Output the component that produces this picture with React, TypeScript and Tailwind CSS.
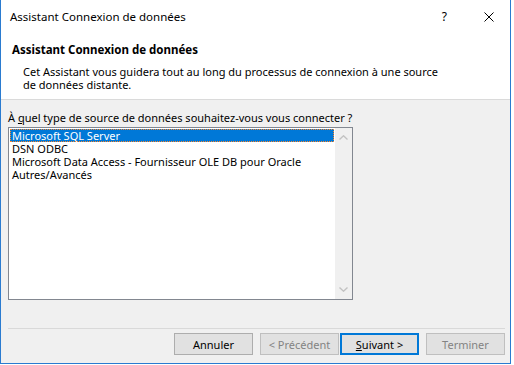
import React from "react";

const font = { fontFamily: '"Noto Sans", "Segoe UI", sans-serif' };

function Btn({
  children,
  disabled,
  primary,
}: {
  children: React.ReactNode;
  disabled?: boolean;
  primary?: boolean;
}) {
  return (
    <div
      className={
        "w-[79px] h-[22px] flex items-center justify-center bg-[#e1e1e1] text-[11px] leading-none " +
        (primary
          ? "border-2 border-[#0078d7] text-black"
          : disabled
          ? "border border-[#bfbfbf] text-[#838383]"
          : "border border-[#adadad] text-black")
      }
    >
      {children}
    </div>
  );
}

export default function App() {
  const items = [
    "Microsoft SQL Server",
    "DSN ODBC",
    "Microsoft Data Access - Fournisseur OLE DB pour Oracle",
    "Autres/Avancés",
  ];
  return (
    <div className="w-[514px] h-[365px] bg-white" style={font}>
      <div className="w-[511px] h-[364px] border-x border-b border-[#2a7bd0] bg-[#f0f0f0] flex flex-col text-black">
        {/* title bar */}
        <div className="h-[31px] bg-white flex items-center shrink-0">
          <div className="pl-[9px] text-[11.5px] leading-none pt-[3px]">
            Assistant Connexion de données
          </div>
          <div className="ml-auto flex items-center pt-[3px]">
            <div className="text-[12px] leading-none mr-[37px]">?</div>
            <svg width="10" height="10" viewBox="0 0 10 10" className="mr-[16px]">
              <path d="M0.5 0.5 L9.5 9.5 M9.5 0.5 L0.5 9.5" stroke="#000" strokeWidth="1" />
            </svg>
          </div>
        </div>
        {/* header */}
        <div className="h-[69px] bg-white border-b border-[#dadada] shrink-0 pt-[11px]">
          <div className="pl-[11px] text-[11.5px] font-bold leading-[16px]">
            Assistant Connexion de données
          </div>
          <div className="pl-[22px] pt-[7px] text-[11px] leading-[13px]">
            Cet Assistant vous guidera tout au long du processus de connexion à une source
            <br />
            de données distante.
          </div>
        </div>
        {/* body */}
        <div className="h-[264px] flex flex-col pl-[7px] pr-[5px]">
          <div className="pt-[10px] h-[27px] text-[11px] leading-[16px]">
            À <span className="underline">q</span>uel type de source de données souhaitez-vous vous connecter ?
          </div>
          <div className="w-[345px] h-[173px] border border-[#828790] bg-white flex shrink-0">
            <div className="flex-1 p-[1px] text-[11px] leading-[13px]">
              {items.map((t, i) => (
                <div
                  key={t}
                  className={
                    "h-[13px] pl-[2px] whitespace-nowrap " +
                    (i === 0
                      ? "bg-[#0078d7] text-white outline outline-1 -outline-offset-1 outline-dotted outline-[#ff8728]"
                      : "")
                  }
                >
                  {t}
                </div>
              ))}
            </div>
            <div className="w-[17px] bg-[#f0f0f0] flex flex-col items-center justify-between py-[7px]">
              <svg width="9" height="5" viewBox="0 0 9 5">
                <path d="M0.5 4.5 L4.5 0.8 L8.5 4.5" stroke="#c2c2c2" strokeWidth="1.4" fill="none" />
              </svg>
              <svg width="9" height="5" viewBox="0 0 9 5">
                <path d="M0.5 0.5 L4.5 4.2 L8.5 0.5" stroke="#c2c2c2" strokeWidth="1.4" fill="none" />
              </svg>
            </div>
          </div>
          <div className="mt-[28px] h-px bg-[#d9d9d9] shrink-0" />
          <div className="mt-[4px] flex justify-end">
            <Btn>Annuler</Btn>
            <div className="w-[7px]" />
            <Btn disabled>&lt; Précédent</Btn>
            <div className="w-[1px]" />
            <Btn primary>
              <span>
                <span className="underline">S</span>uivant &gt;
              </span>
            </Btn>
            <div className="w-[7px]" />
            <Btn disabled>Terminer</Btn>
          </div>
        </div>
      </div>
    </div>
  );
}
